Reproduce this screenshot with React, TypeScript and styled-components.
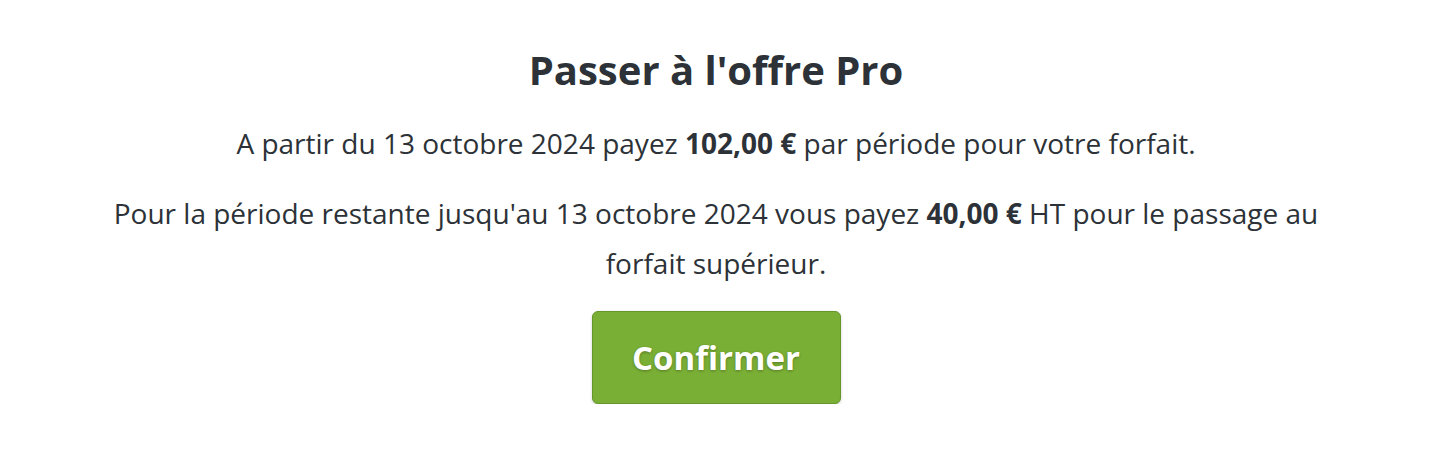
import React from "react";
import styled, { createGlobalStyle } from "styled-components";

const GlobalStyle = createGlobalStyle`
  body {
    margin: 0;
    background: #ffffff;
    font-family: "Open Sans", "Lato", sans-serif;
    color: #2c3237;
  }
`;

const Page = styled.div`
  display: flex;
  flex-direction: column;
  align-items: center;
  padding: 50px 80px 0 72px;
`;

const Title = styled.h1`
  font-size: 40px;
  font-weight: 700;
  line-height: 40px;
  margin: 0 0 28px;
  text-align: center;
`;

const Text = styled.p`
  font-size: 28px;
  line-height: 50px;
  margin: 0 0 20px;
  text-align: center;
  max-width: 1260px;

  &:last-of-type {
    margin-bottom: 23px;
  }

  strong {
    font-weight: 700;
  }
`;

const ConfirmButton = styled.button`
  width: 249px;
  height: 93px;
  background: #7aaf35;
  border: 1px solid #64962a;
  border-radius: 6px;
  box-shadow: 0 1px 3px rgba(0, 0, 0, 0.2);
  color: #ffffff;
  font-family: "Open Sans", "Lato", sans-serif;
  font-size: 33px;
  font-weight: 700;
  text-shadow: 0 1px 3px rgba(0, 0, 0, 0.3);
  cursor: pointer;
`;

function App() {
  return (
    <>
      <GlobalStyle />
      <Page>
        <Title>Passer à l'offre Pro</Title>
        <Text>
          A partir du 13 octobre 2024 payez <strong>102,00 €</strong> par
          période pour votre forfait.
        </Text>
        <Text>
          Pour la période restante jusqu'au 13 octobre 2024 vous payez{" "}
          <strong>40,00 €</strong> HT pour le passage au forfait supérieur.
        </Text>
        <ConfirmButton>Confirmer</ConfirmButton>
      </Page>
    </>
  );
}

export default App;
